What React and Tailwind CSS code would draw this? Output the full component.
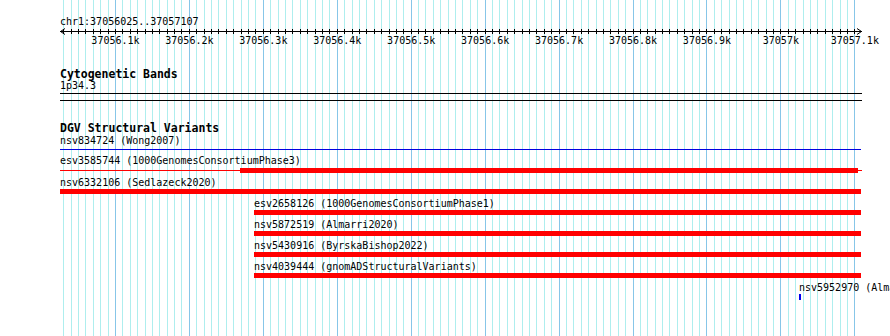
import React from "react";

const START = 37056025;
const END = 37057107;
const LEFT = 60;
const WIDTH = 800;
const xOf = (bp) => LEFT + ((bp - START) * WIDTH) / (END - START);

const gridBps = [];
for (let bp = 37056030; bp <= 37057100; bp += 10) gridBps.push(bp);

const majorLabels = [
  [37056100, "37056.1k"],
  [37056200, "37056.2k"],
  [37056300, "37056.3k"],
  [37056400, "37056.4k"],
  [37056500, "37056.5k"],
  [37056600, "37056.6k"],
  [37056700, "37056.7k"],
  [37056800, "37056.8k"],
  [37056900, "37056.9k"],
  [37057000, "37057k"],
  [37057100, "37057.1k"],
];

function Grid() {
  return (
    <svg className="absolute inset-0" width="890" height="336">
      {gridBps.map((bp) => {
        const x = Math.floor(xOf(bp)) + 0.5;
        const major = bp % 100 === 0;
        return (
          <line
            key={bp}
            x1={x}
            x2={x}
            y1="0"
            y2="336"
            stroke={major ? "#87c6e8" : "#aeeeee"}
            strokeWidth="1"
          />
        );
      })}
    </svg>
  );
}

function Ruler() {
  return (
    <svg className="block" width="890" height="68">
      <text x="60" y="25" fontSize="10" fill="#000">
        chr1:37056025..37057107
      </text>
      <line x1="60" x2="862" y1="31.5" y2="31.5" stroke="#000" />
      <polyline points="65,28.5 60.5,31.5 65,34.5" fill="none" stroke="#000" />
      <polyline points="857,28.5 861.5,31.5 857,34.5" fill="none" stroke="#000" />
      {gridBps.map((bp) => {
        const x = Math.floor(xOf(bp)) + 0.5;
        return <line key={bp} x1={x} x2={x} y1="29" y2="34" stroke="#000" />;
      })}
      {majorLabels.map(([bp, label]) => (
        <text key={bp} x={xOf(bp)} y="44" fontSize="10" textAnchor="middle" fill="#000">
          {label}
        </text>
      ))}
    </svg>
  );
}

function Label({ children, className = "h-[12px]" }) {
  return <div className={`${className} text-[10px] leading-[11px] whitespace-nowrap`}>{children}</div>;
}

function Variant({ label, pad, bar }) {
  return (
    <div className={`h-[21px] ${pad}`}>
      <Label>{label}</Label>
      <div className={`h-[5px] bg-[#ff0000] ${bar}`} />
    </div>
  );
}

export default function App() {
  return (
    <div className="relative w-[890px] h-[336px] overflow-hidden bg-white text-black font-['DejaVu_Sans_Mono',monospace]">
      <Grid />
      <div className="relative">
        <Ruler />

        {/* Cytogenetic Bands */}
        <div className="pl-[60px]">
          <div className="h-[12px] text-[11.5px] leading-[12px] font-bold">Cytogenetic Bands</div>
          <Label>1p34.3</Label>
          <div className="mt-px h-px w-[802px] bg-black" />
          <div className="mt-[6px] h-px w-[802px] bg-black" />
        </div>

        {/* DGV Structural Variants */}
        <div className="mt-[21px] pl-[60px] h-[12px] text-[11.5px] leading-[12px] font-bold">DGV Structural Variants</div>

        <div className="mt-px">
          <div className="h-[20px] pl-[60px]">
            <Label className="h-[14px]">nsv834724 (Wong2007)</Label>
            <div className="h-px w-[801px] bg-[#0000e0]" />
          </div>

          <div className="h-[22px] pl-[60px]">
            <Label className="h-[13px]">esv3585744 (1000GenomesConsortiumPhase3)</Label>
            <div className="flex items-center h-[5px]">
              <div className="w-[180px] h-px bg-[#ff0000]" />
              <div className="w-[618px] h-[5px] bg-[#ff0000]" />
              <div className="w-[4px] h-px bg-[#ff0000]" />
            </div>
          </div>

          <Variant label="nsv6332106 (Sedlazeck2020)" pad="pl-[60px]" bar="w-[801px]" />
          <Variant label="esv2658126 (1000GenomesConsortiumPhase1)" pad="pl-[254px]" bar="w-[607px]" />
          <Variant label="nsv5872519 (Almarri2020)" pad="pl-[254px]" bar="w-[607px]" />
          <Variant label="nsv5430916 (ByrskaBishop2022)" pad="pl-[254px]" bar="w-[607px]" />
          <Variant label="nsv4039444 (gnomADStructuralVariants)" pad="pl-[254px]" bar="w-[607px]" />

          <div className="h-[21px] pl-[799px]">
            <Label>nsv5952970 (Almarri2020)</Label>
            <div className="h-[6px] w-[2px] bg-[#0000ee]" />
          </div>
        </div>
      </div>
    </div>
  );
}
